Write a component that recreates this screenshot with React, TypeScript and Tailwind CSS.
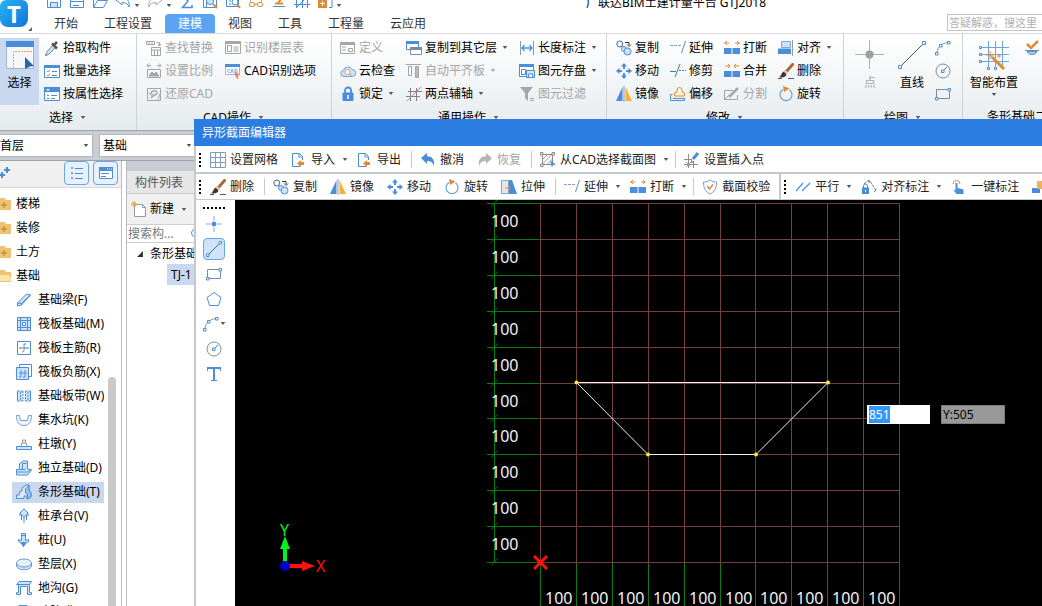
import { useEffect, useRef, type ReactNode } from "react";
import clsx from "clsx";

const B = "#4a8edb";
const G = "#a6a6a6";
const O = "#e08a35";
const L = "#cfe3f8";

const icons: Record<string, ReactNode> = {
  save: <g stroke={B}><path d="M1.5 1.5h13v13h-13z" fill="#fff" /><path d="M4.5 14V9.5h7V14M4.5 2v4h7V2" fill={L} /></g>,
  window: <g stroke={B}><path d="M1.5 1.5h13v13h-13z" fill="#fff" /><path d="M1.5 8.5h13M4 12.5h6" /></g>,
  open: <path d="M1.5 14.5V3.5h5l2 2h5v2M1.5 14.5l4-7h10l-4 7z" stroke={B} fill="#fff" />,
  undo: <path d="M1 6l6-5v3.200c5 0 8 3 7 10.300-1-4-3-5.500-7-5.500v3z" fill={B} />,
  undoLine: <path d="M1 7l6-5v3c5 0 8 3 7 9-1-3-3-4.500-7-4.500V12z" stroke={B} fill="#fff" />,
  redo: <path d="M15 6L9 1v3.200c-5 0-8 3-7 10.300 1-4 3-5.500 7-5.500v3z" fill="#b5b5b5" />,
  redoLine: <path d="M15 7L9 2v3c-5 0-8 3-7 9 1-3 3-4.500 7-4.500V12z" stroke={G} fill="#fff" />,
  sum: <path d="M13 4V1.500H3.500L9 8l-5.500 6.500H13V12" stroke={B} strokeWidth="1.500" />,
  searchBox: <g stroke={B}><path d="M1.500 1.500h13v13h-13zM4.500 8v6" /><circle cx="8" cy="8" r="3.500" fill={L} /><path d="M11 11l4 4" stroke={O} strokeWidth="2" /></g>,
  searchList: <g stroke={B}><path d="M1.500 1.500h12v12h-12zM4 5h2M4 8h2M4 11h2" /><circle cx="10" cy="9" r="3" fill="#fff" /><path d="M12 11l3 4" stroke={O} strokeWidth="2" /></g>,
  glasses: <g stroke={O}><path d="M2.500 9V2.500h11V9" stroke={G} /><rect x="1.500" y="9.500" width="5" height="4" rx="1.500" /><rect x="9.500" y="9.500" width="5" height="4" rx="1.500" /><path d="M6.500 11h3" /></g>,
  stamp: <g stroke={O}><path d="M2 13.500h12" stroke={B} /><path d="M4 10.500h8M7 10l5-6" strokeWidth="2" /></g>,
  mesh: <path d="M0 6.500h16M0 11.500h16M2.500 2v13M8.500 2v13M13.500 2v13M3 14l10-10" stroke={B} />,
  addBox: <g><rect x="1" y="6" width="9" height="9" fill={O} /><path d="M5.500 8v5M3 10.500h5" stroke="#fff" /><path d="M12 14.500h3V2" stroke={B} /></g>,
  dropper: <g><path d="M9 5l2.500 2.500-7 7-3 1 1-3z" fill={L} stroke="#6b7d90" /><path d="M8 3.500l5 5M10 5l3-3" stroke="#555" strokeWidth="2.500" /></g>,
  batch: <g><path d="M.5 2.500h15v12H.5z" stroke={B} fill="#fff" /><path d="M0 2h16v3H0z" fill={B} /><path d="M3 8l1 1 2-2M3 12l1 1 2-2" stroke={O} /><path d="M8 8.500h5M8 12.500h5" stroke={B} /></g>,
  attr: <g><path d="M.5 1.500h15v13H.5z" stroke={B} fill="#fff" /><path d="M0 1h16v5H0z" fill={B} /><path d="M2 3h4L4 5z" fill="#fff" /><path d="M3 9.500h2m2 0h6M3 12.500h2m2 0h4" stroke={B} /></g>,
  replace: <g stroke={G}><path d="M.5 1.500h8v3h-8zM3 2v2M6 2v2M10.500 2.500h3v3M12 4l1.500 2L15 4M5.500 7.500h9v8h-9zM5.500 10h9M8.500 10v5M11.500 10v5" /></g>,
  ratio: <g stroke={G}><path d="M1 2.500h4M3 .5l-2 2 2 2M15 2.500h-4M13 .5l2 2-2 2M1.500 6.500h13v8h-13z" /><path d="M3 13l3-4 2 2 2-2 3 4z" fill={G} /></g>,
  restore: <g stroke={G}><path d="M1.500 2.500h13v12h-13z" /><path d="M5 8c0-4 6-4 6-1 0 2-4 2-6 5" strokeWidth="1.500" /><path d="M3 7l2 2.500L8 8M12 14L15 5" /></g>,
  floorTable: <g stroke={G}><path d="M.5 1.500h15v12H.5zM2.500 5.500h4v6h-4zM8.500 7h5M8.500 9h5M8.500 11h5" /><path d="M1 3h14" strokeWidth="2" /></g>,
  cadOption: <g><path d="M.5 1.500h14v10H.5z" stroke="#8fb8e8" fill="#fff" /><path d="M0 1h15v3H0z" fill={B} /><path d="M5 6.500c-3-.5-3 3.500 0 3M6 10l1-4 1.500 4M10 6v4c3 0 3-4 0-4" stroke="#7daae0" /><path d="M10 8l5 4-2 .5.500 3-1.500.5-1-3-1 1z" fill="#e9875a" /></g>,
  define: <g stroke={G}><path d="M.5 2.500h14v11H.5zM2 7h4M2 10h4M8.500 8.500h4v3h-4z" /><path d="M0 3.500h15" strokeWidth="3" /></g>,
  cloud: <g><path d="M4 13.500a3 3 0 01-.5-6 4.500 4.500 0 018.500-1 3.500 3.500 0 01.5 7z" fill={L} stroke="#7ba3cf" /><circle cx="7.500" cy="9" r="2.500" stroke="#d69b78" fill="#fff" /><path d="M9.500 11l2 2" stroke={O} /></g>,
  lock: <g><path d="M5 7V4.500a3 3 0 016 0V7" stroke={B} strokeWidth="1.800" /><rect x="2.500" y="6.500" width="11" height="8.500" rx="1" fill={B} /><path d="M8 9v4" stroke="#fff" strokeWidth="1.500" /></g>,
  copyLayer: <g><path d="M.5 1.500h12v8H.5z" stroke={B} fill="#fff" /><path d="M0 1h13v3H0z" fill={B} /><path d="M4.500 7.500h11v7h-11z" stroke="#7c8c9c" fill="#fff" /><path d="M4 7h12v3H4z" fill="#7c8c9c" /></g>,
  alignSlab: <g stroke={G}><path d="M0 1.500h15M2.500 3.500h3v9h-3z" /><path d="M9.500 3.500h3v11h-3z" fill="#b8b8b8" /></g>,
  axis: <g stroke="#808080"><path d="M2 5.500h14M0 10.500h14M4.500 2v13M10.500 2v13" /><path d="M1 15L15 1" stroke="#c08a62" /></g>,
  length: <g stroke={B}><path d="M1.500 1v14M14.500 1v14" stroke="#7f9dbd" /><path d="M3 8h10M5.500 5L3 8l2.500 3M10.500 5L13 8l-2.500 3" strokeWidth="1.300" /></g>,
  store: <g><path d="M.5 2.500h14v11H.5z" stroke={B} fill="#fff" /><path d="M0 1h15v3H0z" fill={B} /><path d="M2.500 6.500h4v5h-4z" stroke={B} /><path d="M7.500 7.500h8v7h-8z" stroke={B} fill={L} /><path d="M9.500 14v-3h4v3" stroke={B} fill="#fff" /></g>,
  filter: <g><path d="M1 1h13L9 7v8l-3-3V7z" fill={G} /><path d="M11 12.500h4M11 14.500h4" stroke={G} /></g>,
  copy: <g><circle cx="3.800" cy="4" r="3" stroke="#58687a" fill="#f5f5f5" /><circle cx="8" cy="9" r="2.500" stroke={B} fill={L} /><circle cx="11.500" cy="11.500" r="3.500" stroke={B} fill={L} /><path d="M9 2.500h4V5M11 4.500l2 2 2-2" stroke="#333" /></g>,
  move: <g fill={B}><path d="M8 0l3 3.500H9V6H7V3.500H5zM8 16l3-3.500H9V10H7v2.500H5zM0 8l3.500-3v2H6v2H3.500v2zM16 8l-3.500-3v2H10v2h2.500v2z" /></g>,
  mirror: <g><path d="M6.500 1v14H0z" fill={B} /><path d="M9.500 1v14H16z" fill="#f2b233" /><path d="M8 0v16" stroke="#999" /></g>,
  extend: <g><path d="M0 5.500h11" stroke="#7da3cf" strokeDasharray="3 1" /><path d="M15.500 1l-4 12" stroke="#6a87a8" /></g>,
  trim: <g><path d="M0 8.500h6M9 7.500h2m1 0h2m1 0h1" stroke="#4a78ad" /><path d="M10 1L5 14" stroke="#4a78ad" /></g>,
  offset: <g><path d="M4.500 12.500v-3l2.500-1V6.500a2.500 2.500 0 015 0v2l2.500 1v3z" stroke={O} fill="#fff5e4" transform="translate(0 -2.500)" /><path d="M2.500 8.500h-2v6h14v-2" stroke={B} /><path d="M3 12.500h12" stroke={B} /></g>,
  split: <g><path d="M0 8h7.500v6H0zM8.500 8H16v6H8.500z" fill={B} /><path d="M0 3h5M3 1L1 3l2 2M16 3h-5M13 1l2 2-2 2" stroke={O} /></g>,
  merge: <g><path d="M0 8h7.500v6H0zM8.500 8H16v6H8.500z" fill={B} /><path d="M1 3h5M4 1l2 2-2 2M15 3h-5M12 1l-2 2 2 2" stroke={O} /></g>,
  cut: <g stroke={G}><path d="M9 4.500H.5v9h13V9M.5 13.500L5 9" /><path d="M5 11l9-9" strokeWidth="2.500" /></g>,
  align: <g><path d="M3.500 1.500h9v6h-9z" fill={L} stroke="#7fa9d4" /><path d="M0 8.500h13V14H0z" fill={B} /><path d="M14.500 0v16" stroke="#999" /></g>,
  brush: <g><path d="M14.500 1.500L8 9" stroke="#a86a33" strokeWidth="3" strokeLinecap="round" /><path d="M6 7.500l4 3" stroke="#d6d0c8" strokeWidth="2" /><path d="M5.500 8.500l3 3c-1 3-4 3-7.500 3 2-1 2-4 4.500-6z" fill="#4a3324" /><path d="M0 15.500h4m6 0h6" stroke="#555" /></g>,
  rotate: <g><path d="M5 3.500a6 6 0 106.500.3" stroke="#6d9bd0" strokeWidth="1.200" /><path d="M5 0l6.500 2.500L6 6z" fill={O} /></g>,
  arc: <g stroke={B}><path d="M2 13C2 7 7 3 13 2.500" stroke="#8292a4" /><path d="M.5 12.500h2.500V15H.5zM4.500 4.500H7V7H4.500zM12.500 1.500H15V4h-2.500z" fill="#fff" /></g>,
  circle: <g><circle cx="8" cy="8" r="7" stroke="#7c8c9e" /><path d="M8 8l4-4" stroke={B} /><path d="M6.500 7h2.500v2.500H6.500z" stroke={B} fill="#fff" /></g>,
  rect: <g><path d="M1.500 3.500h13v9h-13z" stroke="#7c8c9e" /><path d="M.5 11.500H3V14H.5zM13 2.500h2.500V5H13z" fill="#fff" stroke={B} /></g>,
  check: <g><path d="M3 4l4 4 7-7" stroke={O} strokeWidth="2.500" /><path d="M1 10.500h14M3 11.500c2 4 8 4 10 0z" stroke="#5f8fc4" fill="#a9c9ee" /></g>,
  grid: <path d="M.5.5h15v15H.5zM.5 5.500h15M.5 10.500h15M5.500.5v15M10.500.5v15" stroke="#7f9dbd" />,
  importDoc: <g><path d="M9 14.500H1.500v-13h7l3 3V8" stroke={B} /><path d="M8 1.500v3.500h3" stroke={B} /><path d="M6 11.500L10 8v2h3v3h-3v2z" fill={O} /></g>,
  pickCad: <g><path d="M2.500 2.500h10v10h-10z" stroke="#888" /><path d="M2 8l6-6M2 12.500L12.500 2M7 12.500L12.500 7" stroke="#999" /><path d="M.5.5H3V3H.5zM12 .5h2.500V3H12zM.5 12H3v2.500H.5z" stroke="#888" fill="#fff" /><path d="M10 8.500l6 4-3 .5-1 2.500z" fill={B} /></g>,
  insertPt: <g><path d="M4.500 2v14M9.500 9v7M0 7.500h8M0 12.500h14" stroke="#8a8a8a" /><path d="M14 1L9 7" stroke={B} strokeWidth="3" /><path d="M7 11l0-3 3 2z" fill={B} /><path d="M2 10l5 5M7 10l-5 5" stroke="#d99a70" /></g>,
  stretch: <g><path d="M.5 1.500h7v13h-7z" stroke="#8da3ba" fill="#e2e7ee" /><path d="M8 1h3l5 14H8z" fill={B} /><path d="M4 9h5M7 7l2 2-2 2" stroke={O} /></g>,
  shield: <g><path d="M8 1c2 1.500 4 2 6.500 2 0 6-2 10-6.500 12C3.500 13 1.500 9 1.500 3 4 3 6 2.500 8 1z" stroke="#6da0d8" fill="#fff" /><path d="M5 7l2.500 3L11 5.500" stroke={O} strokeWidth="1.500" /></g>,
  parallel: <path d="M1 12L8 4M7 12l8-8" stroke={B} strokeWidth="1.200" />,
  alignDim: <g><path d="M2.500 9V7a2 2 0 014 0v2" stroke={B} /><path d="M1 8.500h7V15H1z" fill={B} /><path d="M4.500 11v2" stroke="#fff" /><path d="M3 5l5-4 7 10M8 1v3M13 13l3-3" stroke="#667d94" strokeDasharray="3 1" /></g>,
  hand: <g><path d="M2 5a3.500 3.500 0 117 0" stroke={O} /><path d="M4.500 4h2v5l6 1.500V15h-7L2 10.500l2.500 1z" fill={B} /></g>,
  blocks: <g><path d="M0 9h8v5H0z" fill={B} /><path d="M5 2h9v8H5z" fill="#f0b05c" /></g>,
  point: <g stroke={B}><path d="M8 0v5M8 11v5M0 8h5M11 8h5" stroke="#86aee0" /><circle cx="8" cy="8" r="2" fill={B} /></g>,
  line: <g stroke={B}><path d="M2 14L14 2" stroke="#55687c" /><path d="M.5 13H3v2.500H.5zM13 .5h2.500V3H13z" fill="#fff" /></g>,
  pentagon: <path d="M8 1.500L15 6.500 12.500 14.500h-9L1 6.500z" stroke={B} fill="#fff" />,
  tool: <g stroke={B}><path d="M1.500 5V1.500h13V5M5 14.500h6" /><path d="M1 2h14M8 1.500v13" strokeWidth="2" /></g>,
  newDoc: <g><path d="M3.500 3.500h8l3 3v9h-11z" stroke="#8f9ba8" fill="#fff" /><path d="M11.500 3.500v3h3" stroke="#8f9ba8" /><path d="M1 1l4 4M5 1L1 5M3 0v6M0 3h6" stroke="#eda23c" /></g>,
  beam: <g stroke={B}><path d="M1.500 11l9-9 4 1-9 10-4 1z" fill={L} /><path d="M1.500 11l4 .5v1.500M5.500 11.500l9-8.500" /></g>,
  raft: <g stroke={B}><path d="M1.500 1.500h13v13h-13z" fill={L} /><path d="M1.500 4.500h13M1.500 11.500h13M4.500 1.500v13M11.500 1.500v13" /><path d="M6.500 6.500h3v3h-3z" fill="#fff" /></g>,
  raftMain: <g><path d="M1.500 1.500h13v13h-13z" stroke={B} fill="#fff" /><path d="M4 8h8M8 4c0 4 1 8-2 8M4 7v2M12 7v2M8 4h2" stroke="#6a87a5" /></g>,
  raftNeg: <g stroke={B}><path d="M3.500.5h12v12h-12z" /><path d="M.5 3.500h12v12H.5z" fill={L} /><path d="M5 6v7H3M9 6v7H7M3 9h8" /></g>,
  band: <g stroke={B}><path d="M1.500 3v10M14.500 3v10" /><path d="M2 3h12v10H2z" fill={L} stroke="none" /><path d="M8 3v10" stroke="#fff" strokeWidth="2" /><path d="M1.500 3h5M9.500 3h5M1.500 13h5M9.500 13h5M4.500 4v8M7 3v10M9.500 3v10M12 4v8" strokeDasharray="2 1" /></g>,
  pit: <path d="M.5 3.500h3l1 5h7l1-5h3c0 6-2 10-7.500 10S.5 9.500.5 3.500z" stroke="#78a2d0" fill="#edf5fd" />,
  pier: <g stroke={B}><path d="M.5 10.500h15v3H.5z" fill={L} /><path d="M5 10l1-3h4l1 3M6.500 7V4h3v3" stroke="#8a97a2" /></g>,
  single: <g stroke={B}><path d="M.5 12.500v-3h3V3.500l4-2.500h4v8l4 1-4 5H.5z" fill={L} /><path d="M6.500 9V3.500h4M.5 12h11l4-3M3.500 9.500h6" /></g>,
  strip: <g stroke={B}><path d="M.5 14.500V11h2.500l1-4h2V4l4-3h3v5l2 3v4l-4 2v-3H8v2.500z" fill="#dbe9f8" /><path d="M9.500 5l3.500-4v5l2 3v4l-3.500 2V10l-2-1z" fill="#9cc3f0" /></g>,
  cap: <g stroke={B}><path d="M8 .8L12 5 8 9.500 4 5z" fill={L} /><path d="M5.500 7v5M8 9v6M10.500 7v5M4 5v3M12 5v3" /></g>,
  pile: <g stroke={B}><path d="M5.500 1.500h4v7l3-1v2l-3 2L7.500 14.500 5.500 11.500l-3-2v-2l3 1z" fill={L} /><path d="M5.500 3.500h4M5.500 10.500h4l-2 4z" fill={B} /></g>,
  cushion: <g stroke="#6c9bd0"><path d="M.5 7v3c1 5 14 5 15 0V7" fill={L} /><ellipse cx="8" cy="7" rx="7.500" ry="4" fill="#e8f2fc" /></g>,
  trench: <g stroke={B}><path d="M.5 4.500l3-3h12l-2 3zM2.500 4.500v8h-2v2h4v-8h7v8h4v-2h-2v-8" fill={L} /></g>,
  hook: <g stroke={B}><path d="M3 1.500h8v13H3z" fill={B} /></g>,
};

function Icon({ name, className = "h-4 w-4" }: { name: string; className?: string }) {
  return (
    <svg viewBox="0 0 16 16" fill="none" className={clsx("shrink-0", className)} aria-hidden="true">
      {icons[name]}
    </svg>
  );
}

function Caret({ className, muted }: { className?: string; muted?: boolean }) {
  return (
    <svg viewBox="0 0 6 4" className={clsx("h-[3px] w-1.5 shrink-0", className)} aria-hidden="true">
      <path d="M0 0h6L3 4z" fill={muted ? "#a8a8a8" : "#555"} />
    </svg>
  );
}

interface Action {
  icon: string;
  label: string;
  menu?: boolean;
  disabled?: boolean;
}

function RibbonColumn({ items }: { items: Action[] }) {
  return (
    <div className="flex flex-col items-start">
      {items.map((item) => (
        <button
          key={item.label}
          type="button"
          disabled={item.disabled}
          className="flex h-[23px] items-center gap-[3px] whitespace-nowrap text-black disabled:text-[#a5a5a5]"
        >
          <Icon name={item.icon} />
          {item.label}
          {item.menu && <Caret muted={item.disabled} className="ml-0.5" />}
        </button>
      ))}
    </div>
  );
}

function RibbonGroup({ title, className, children }: { title: string; className?: string; children: ReactNode }) {
  return (
    <section className="flex shrink-0 flex-col border-r border-[#cdd2d6] pt-0.5">
      <div className={clsx("flex h-[69px]", className)}>{children}</div>
      <button type="button" className="flex h-[26px] items-center justify-center gap-1.5 whitespace-nowrap">
        {title}
        <Caret className="w-2" />
      </button>
    </section>
  );
}

function BigButton({ label, className, disabled, menu, children }: { label: string; className?: string; disabled?: boolean; menu?: boolean; children: ReactNode }) {
  return (
    <button
      type="button"
      disabled={disabled}
      className={clsx("flex shrink-0 flex-col items-center whitespace-nowrap pt-0.5 disabled:text-[#a5a5a5]", className)}
    >
      <svg viewBox="0 0 30 30" fill="none" className="h-[30px] w-[30px]" aria-hidden="true">
        {children}
      </svg>
      <span className="mt-[3px] leading-5">{label}</span>
      {menu && <Caret />}
    </button>
  );
}

const quickIcons: { icon: string; menu?: boolean }[] = [
  { icon: "save" },
  { icon: "window" },
  { icon: "open" },
  { icon: "undoLine", menu: true },
  { icon: "redoLine", menu: true },
  { icon: "sum" },
  { icon: "searchBox" },
  { icon: "searchList" },
  { icon: "glasses" },
  { icon: "stamp" },
  { icon: "mesh" },
  { icon: "addBox", menu: true },
];

const tabs = ["开始", "工程设置", "建模", "视图", "工具", "工程量", "云应用"];

function Header() {
  return (
    <header className="flex h-[33px] shrink-0 bg-white">
      <div className="flex w-[41px] shrink-0 items-start">
        <div className="flex h-[27px] w-7 items-center justify-center rounded-b-lg rounded-t-md bg-gradient-to-br from-[#27b4f2] to-[#1475dc] text-2xl font-bold leading-none text-white">
          T
        </div>
        <svg viewBox="0 0 4 4" className="mt-[27px] h-1 w-1"><path d="M4 0v4H0z" fill="#666" /></svg>
      </div>
      <div className="flex min-w-0 flex-1 flex-col">
        <div className="flex h-3.5 shrink-0 items-end">
          <div className="flex items-end gap-[7px] pb-[5px] pl-[5px]">
            {quickIcons.map((item) => (
              <button key={item.icon} type="button" aria-label={item.icon} className="flex items-center gap-[3px]">
                <Icon name={item.icon} />
                {item.menu && <Caret className="mt-2" />}
              </button>
            ))}
          </div>
          <h1 className="flex-1 whitespace-nowrap pb-[3px] pr-8 text-center leading-4">广联达BIM土建计量平台 GTJ2018</h1>
        </div>
        <div className="flex">
          <nav className="flex">
            {tabs.map((tab) => (
              <button
                key={tab}
                type="button"
                className={clsx("h-[19px] px-[13px] leading-[19px]", tab === "建模" ? "rounded-t-sm bg-[#5ba4f4] text-white" : "text-[#333]")}
              >
                {tab}
              </button>
            ))}
          </nav>
          <input
            aria-label="搜索"
            placeholder="答疑解惑，搜这里"
            className="ml-auto h-[17px] w-[95px] border border-r-0 border-[#c4c4c4] pl-px text-[11px] placeholder:text-[#b0b0b0]"
          />
        </div>
      </div>
    </header>
  );
}

function Ribbon() {
  return (
    <div className="flex h-[98px] shrink-0 overflow-hidden border-y border-t-[#d6d9dc] border-b-[#9ea3aa] bg-gradient-to-b from-white to-[#e6ebee]">
      <RibbonGroup title="选择" className="w-[136px] gap-[5px]">
        <BigButton label="选择" className="mt-0.5 w-[39px] bg-[#c8d8ef]">
          <path d="M1.500 1.500h27v27h-27z" fill="#f5f7fa" stroke="#9db4d0" />
          <path d="M1 1h28v6H1z" fill={B} />
          <path d="M8.500 28V11.500H29" stroke="#e5ab45" strokeDasharray="2 1" />
          <path d="M20 17l9 9-4 .5L20 29z" fill="#2a66ad" />
        </BigButton>
        <RibbonColumn
          items={[
            { icon: "dropper", label: "拾取构件" },
            { icon: "batch", label: "批量选择" },
            { icon: "attr", label: "按属性选择" },
          ]}
        />
      </RibbonGroup>
      <RibbonGroup title="CAD操作" className="w-[194px] gap-3 pl-[9px]">
        <RibbonColumn
          items={[
            { icon: "replace", label: "查找替换", disabled: true },
            { icon: "ratio", label: "设置比例", disabled: true },
            { icon: "restore", label: "还原CAD", disabled: true },
          ]}
        />
        <RibbonColumn
          items={[
            { icon: "floorTable", label: "识别楼层表", disabled: true },
            { icon: "cadOption", label: "CAD识别选项" },
          ]}
        />
      </RibbonGroup>
      <RibbonGroup title="通用操作" className="w-[274px] gap-[11px] pl-2">
        <RibbonColumn
          items={[
            { icon: "define", label: "定义", disabled: true },
            { icon: "cloud", label: "云检查" },
            { icon: "lock", label: "锁定", menu: true },
          ]}
        />
        <RibbonColumn
          items={[
            { icon: "copyLayer", label: "复制到其它层", menu: true },
            { icon: "alignSlab", label: "自动平齐板", menu: true, disabled: true },
            { icon: "axis", label: "两点辅轴", menu: true },
          ]}
        />
        <RibbonColumn
          items={[
            { icon: "length", label: "长度标注", menu: true },
            { icon: "store", label: "图元存盘", menu: true },
            { icon: "filter", label: "图元过滤", disabled: true },
          ]}
        />
      </RibbonGroup>
      <RibbonGroup title="修改" className="w-[236px] gap-[11px] pl-[9px]">
        <RibbonColumn
          items={[
            { icon: "copy", label: "复制" },
            { icon: "move", label: "移动" },
            { icon: "mirror", label: "镜像" },
          ]}
        />
        <RibbonColumn
          items={[
            { icon: "extend", label: "延伸" },
            { icon: "trim", label: "修剪" },
            { icon: "offset", label: "偏移" },
          ]}
        />
        <RibbonColumn
          items={[
            { icon: "split", label: "打断" },
            { icon: "merge", label: "合并" },
            { icon: "cut", label: "分割", disabled: true },
          ]}
        />
        <RibbonColumn
          items={[
            { icon: "align", label: "对齐", menu: true },
            { icon: "brush", label: "删除" },
            { icon: "rotate", label: "旋转" },
          ]}
        />
      </RibbonGroup>
      <RibbonGroup title="绘图" className="w-[118px] pl-[5px]">
        <BigButton label="点" disabled className="mt-0.5 w-[42px]">
          <path d="M14.500 0v29M0 14.500h29" stroke="#b0b0b0" />
          <circle cx="14.500" cy="14.500" r="4" fill="#a0a0a0" />
        </BigButton>
        <BigButton label="直线" className="mt-0.5 w-[42px]">
          <path d="M3 27L27 3" stroke="#555" />
          <path d="M1.500 25.500h3v3h-3zM25.500 1.500h3v3h-3z" fill="#fff" stroke={B} />
        </BigButton>
        <div className="flex w-5 flex-col items-center">
          {["arc", "circle", "rect"].map((name) => (
            <button key={name} type="button" aria-label={name} className="flex h-[23px] items-center">
              <Icon name={name} />
            </button>
          ))}
        </div>
      </RibbonGroup>
      <section className="flex flex-1 flex-col pl-[3px] pt-0.5">
        <div className="flex h-[69px] gap-0.5">
          <BigButton label="智能布置" menu className="mt-0.5 w-14">
            <path d="M2 7.500h28M2 14.500h28M2 21.500h28M9.500 1v28M16.500 1v28M23.500 1v28" stroke="#6ea5e0" />
            <path d="M.5 6.500h2v2h-2zM.5 13.500h2v2h-2zM.5 20.500h2v2h-2zM8.500 27.500h2v2h-2zM15.500 27.500h2v2h-2z" fill="#fff" stroke={B} />
            <path d="M13 17l12 12" stroke={O} strokeWidth="3" />
            <path d="M11 11v8M7 15h8M9 13l5 5M20 14v4M18 16h4" stroke={O} />
          </BigButton>
          <button type="button" aria-label="校核" className="flex h-[23px] items-center">
            <Icon name="check" />
          </button>
        </div>
        <button type="button" className="h-[26px] whitespace-nowrap pl-[21px] text-left">条形基础二次编辑</button>
      </section>
    </div>
  );
}

function Combo({ label, value, className }: { label: string; value: string; className?: string }) {
  return (
    <div className={clsx("relative h-[23px] border border-[#b4b8be] bg-white", className)}>
      <select aria-label={label} className="h-full w-full appearance-none pl-[3px] leading-5">
        <option>{value}</option>
      </select>
      <Caret className="pointer-events-none absolute right-[3px] top-[9px]" />
    </div>
  );
}

const categories = ["楼梯", "装修", "土方", "基础"];

const elements = [
  { icon: "beam", label: "基础梁(F)" },
  { icon: "raft", label: "筏板基础(M)" },
  { icon: "raftMain", label: "筏板主筋(R)" },
  { icon: "raftNeg", label: "筏板负筋(X)" },
  { icon: "band", label: "基础板带(W)" },
  { icon: "pit", label: "集水坑(K)" },
  { icon: "pier", label: "柱墩(Y)" },
  { icon: "single", label: "独立基础(D)" },
  { icon: "strip", label: "条形基础(T)" },
  { icon: "cap", label: "桩承台(V)" },
  { icon: "pile", label: "桩(U)" },
  { icon: "cushion", label: "垫层(X)" },
  { icon: "trench", label: "地沟(G)" },
  { icon: "hook", label: "砖胎膜" },
];

function ElementPanel() {
  return (
    <aside className="flex w-[122px] shrink-0 flex-col border-r border-[#b9bcc0] bg-white">
      <div className="flex h-[27px] shrink-0 items-start border-b border-[#d8d8d8] bg-[#f0f0f0]">
        <svg viewBox="0 0 10 12" className="mt-1.5 h-3 w-2.5" aria-hidden="true">
          <path d="M7 0v6M4 3h6M2 5v6M0 8h5" stroke={B} strokeWidth="2" />
        </svg>
        <button type="button" aria-label="列表" className="ml-auto flex h-6 w-[25px] items-center justify-center rounded-sm border border-[#6aa5e6] bg-[#e6f1fd]">
          <svg viewBox="0 0 14 14" className="h-3.5 w-3.5" fill="none">
            <path d="M1.500 1.500h1v1h-1zM1.500 6.500h1v1h-1zM1.500 11.500h1v1h-1zM5 2.500h8M5 7.500h8M5 12.500h8" stroke={B} />
          </svg>
        </button>
        <button type="button" aria-label="图标" className="ml-1 mr-[3px] flex h-6 w-[25px] items-center justify-center rounded-sm border border-[#6aa5e6] bg-[#e6f1fd]">
          <svg viewBox="0 0 14 14" className="h-3.5 w-3.5" fill="none">
            <path d="M.5 1.500h13v11H.5z" stroke={B} fill="#fff" />
            <path d="M0 1h14v4H0z" fill={B} />
            <path d="M2 7.500h8M2 10.500h5" stroke={B} />
            <path d="M8 3h1M10 3h1M12 3h1" stroke="#fff" />
          </svg>
        </button>
      </div>
      <div className="flex min-h-0 flex-1 overflow-hidden pt-1">
        <ul className="w-[104px] shrink-0 overflow-hidden">
          {categories.map((name) => (
            <li key={name} className="flex h-6 items-center gap-1">
              <svg viewBox="0 0 12 12" className="h-3 w-3 shrink-0" aria-hidden="true">
                <path d="M0 0h5l1 2h5v10H0z" fill="#eec272" />
                {name === "基础" ? <path d="M0 5h9l3 6H0z" fill="#fbe3ae" /> : <path d="M4 4v6M1 7h6" stroke="#b07f2c" />}
              </svg>
              {name}
            </li>
          ))}
          {elements.map((item) => (
            <li key={item.label} className="flex h-6 items-center pl-3">
              <button
                type="button"
                className={clsx("flex h-[21px] flex-1 items-center gap-1.5 whitespace-nowrap pl-1", item.icon === "strip" && "bg-[#c8d8ef]")}
              >
                <Icon name={item.icon} />
                {item.label}
              </button>
            </li>
          ))}
        </ul>
        <div className="ml-1 mt-[185px] w-2 rounded-t-full bg-[#c9c9c9]" />
      </div>
    </aside>
  );
}

function ComponentList() {
  return (
    <section className="ml-1 flex flex-1 flex-col border-l border-[#b9bcc0] bg-white">
      <div className="h-2.5 shrink-0 bg-[#c9ccd2]" />
      <h2 className="h-[23px] shrink-0 border-b border-[#c8c8c8] bg-[#e6e6e6] pl-2 leading-6 text-[#555]">构件列表</h2>
      <div className="flex h-[30px] shrink-0 items-center bg-[#f0f0f0] pl-1">
        <button type="button" className="flex items-center gap-[3px]">
          <Icon name="newDoc" />
          新建
          <Caret className="ml-1" />
        </button>
      </div>
      <div className="flex h-[19px] shrink-0 items-center border-y border-[#cfcfcf]">
        <input aria-label="搜索构件" placeholder="搜索构..." className="w-16 pl-px placeholder:text-[#777]" />
        <svg viewBox="0 0 10 10" className="h-2.5 w-2.5" fill="none"><circle cx="4" cy="4" r="3.500" stroke={B} /></svg>
      </div>
      <ul>
        <li className="flex h-[21px] items-center gap-[7px] pl-2.5">
          <svg viewBox="0 0 6 6" className="h-1.5 w-1.5"><path d="M6 0v6H0z" fill="#333" /></svg>
          条形基础
        </li>
        <li className="ml-10 h-[21px] bg-[#c8d8ef] pl-1 leading-[21px]">TJ-1</li>
      </ul>
    </section>
  );
}

function Grip() {
  return <div className="h-3.5 w-0 shrink-0 border-l-2 border-dotted border-black" />;
}

function Divider() {
  return <div className="ml-[3px] mr-0.5 h-[17px] w-px shrink-0 bg-[#c9c9c9]" />;
}

function ToolButton({ icon, label, menu, disabled }: Action) {
  return (
    <button
      type="button"
      disabled={disabled}
      className={clsx(
        "flex h-full shrink-0 items-center gap-1 whitespace-nowrap pl-1.5 text-[#222] disabled:text-[#a5a5a5]",
        menu ? "pr-[3px]" : "pr-[7px]"
      )}
    >
      <Icon name={icon} />
      {label}
      {menu && <Caret className="ml-[3px]" />}
    </button>
  );
}

const marks = Array.from({ length: 11 }, (_, i) => i);
const cells = marks.slice(0, 10);

// one 100 mm cell on screen
const at = (i: number) => Math.round(i * 35.9);

function SectionDrawing() {
  return (
    <svg className="absolute inset-0 h-full w-full" fill="none" aria-label="截面">
      <g stroke="#743f3f">
        {marks.map((i) => (
          <path key={i} d={`M305.500 ${3.5 + at(i)}h359M${305.5 + at(i)} 3.500v359`} />
        ))}
      </g>
      <g stroke="#0a7a12">
        <path d="M259.500 3v360" />
        {marks.map((i) => (
          <path key={i} d={`M252 ${3.5 + at(i)}h53M256 ${6.5 + at(i)}l7-7M${305.5 + at(i)} 363v400`} />
        ))}
      </g>
      <g fill="#f2f2f2" fontSize="16">
        {cells.map((i) => (
          <text key={i} x="256" y={27 + at(i)}>100</text>
        ))}
        {cells.map((i) => (
          <text key={i} x={310 + at(i)} y="404">100</text>
        ))}
      </g>
      <path d="M341.500 182.500h251.500l-72 72H413z" stroke="#f0f0f0" />
      <g fill="#ffee33">
        <circle cx="341.500" cy="182.500" r="2" />
        <circle cx="593" cy="182.500" r="2" />
        <circle cx="521" cy="254.500" r="2" />
        <circle cx="413" cy="254.500" r="2" />
      </g>
      <path d="M299 356l13 13M312 356l-13 13" stroke="#ff1010" strokeWidth="3" />
      <path d="M50 366V346" stroke="#00f020" strokeWidth="4" />
      <path d="M50 336l5 13H45z" fill="#00f020" />
      <path d="M50 366h18" stroke="#ff1010" strokeWidth="4" />
      <path d="M80 366l-13-5v10z" fill="#ff1010" />
      <circle cx="50" cy="366" r="5" fill="#0000cc" />
      <text x="45" y="336" fill="#00f020" fontSize="16">Y</text>
      <text x="81" y="372" fill="#ff1010" fontSize="16">X</text>
    </svg>
  );
}

function SectionEditor() {
  const xInput = useRef<HTMLInputElement>(null);

  useEffect(() => {
    xInput.current?.focus();
    xInput.current?.select();
  }, []);

  return (
    <div role="dialog" aria-label="异形截面编辑器" className="absolute bottom-0 left-[194px] right-0 top-[119px] flex flex-col overflow-hidden bg-white">
      <h2 className="h-[27px] shrink-0 bg-[#2b7de1] pl-2 leading-7 text-white">异形截面编辑器</h2>
      <div className="flex min-h-0 flex-1 flex-col border-l-2 border-[#c5c8cd]">
        <div className="flex h-7 shrink-0 items-center border-b-2 border-[#c5c8cd] pl-[3px] pt-px">
          <Grip />
          <div className="ml-[3px] flex h-full items-center">
            <ToolButton icon="grid" label="设置网格" />
            <ToolButton icon="importDoc" label="导入" menu />
            <ToolButton icon="importDoc" label="导出" />
            <Divider />
            <ToolButton icon="undo" label="撤消" />
            <ToolButton icon="redo" label="恢复" disabled />
            <Divider />
            <ToolButton icon="pickCad" label="从CAD选择截面图" menu />
            <Divider />
            <ToolButton icon="insertPt" label="设置插入点" />
          </div>
        </div>
        <div className="flex h-[26px] shrink-0 items-center border-b border-[#c5c8cd] pl-[3px]">
          <Grip />
          <div className="ml-[3px] flex h-full items-center">
            <ToolButton icon="brush" label="删除" />
            <Divider />
            <ToolButton icon="copy" label="复制" />
            <ToolButton icon="mirror" label="镜像" />
            <ToolButton icon="move" label="移动" />
            <ToolButton icon="rotate" label="旋转" />
            <ToolButton icon="stretch" label="拉伸" />
            <Divider />
            <ToolButton icon="extend" label="延伸" menu />
            <ToolButton icon="split" label="打断" menu />
            <Divider />
            <ToolButton icon="shield" label="截面校验" />
          </div>
          <div className="ml-0.5 flex h-full items-center border-l-2 border-[#c5c8cd] pl-[3px]">
            <Grip />
            <div className="ml-[3px] flex h-full items-center">
              <ToolButton icon="parallel" label="平行" menu />
              <ToolButton icon="alignDim" label="对齐标注" menu />
              <ToolButton icon="hand" label="一键标注" />
              <button type="button" aria-label="更多" className="pl-1.5">
                <Icon name="blocks" />
              </button>
            </div>
          </div>
        </div>
        <div className="flex min-h-0 flex-1">
          <div className="flex w-[39px] shrink-0 flex-col items-center pr-[3px] pt-[7px]">
            <div className="mb-0.5 h-0 w-[22px] border-t-2 border-dotted border-black" />
            {["point", "line", "rect", "pentagon", "arc", "circle", "tool"].map((name) => (
              <div key={name} className="flex h-[25px] shrink-0 items-center">
                <button
                  type="button"
                  aria-label={name}
                  className={clsx(
                    "flex h-[22px] items-center justify-center rounded-sm border",
                    name === "line" ? "border-[#6aa5e6] bg-[#cfe4fb]" : "border-transparent",
                    name === "arc" ? "w-7 gap-px" : "w-[22px]"
                  )}
                >
                  <Icon name={name} />
                  {name === "arc" && <Caret />}
                </button>
              </div>
            ))}
          </div>
          <div className="relative flex-1 overflow-hidden bg-black">
            <SectionDrawing />
            <input
              ref={xInput}
              aria-label="X"
              defaultValue="851"
              className="absolute left-[632px] top-[205px] h-[19px] w-[63px] bg-white pl-0.5 text-black outline-none selection:bg-[#3297fd] selection:text-white"
            />
            <input
              aria-label="Y"
              defaultValue="Y:505"
              className="absolute left-[706px] top-[205px] h-[19px] w-16 border border-[#7d7d7d] bg-[#989898] pl-px text-black outline-none"
            />
          </div>
        </div>
      </div>
    </div>
  );
}

export default function App() {
  return (
    <div className="relative flex h-screen flex-col overflow-hidden bg-white font-['Noto_Sans','Noto_Sans_CJK_SC',sans-serif] text-xs text-black">
      <Header />
      <Ribbon />
      <div className="flex h-[30px] shrink-0 items-center gap-1.5 border-b border-[#9ea3aa] bg-[#c9ccd2]">
        <Combo label="楼层" value="首层" className="-ml-1 w-[97px]" />
        <Combo label="构件类型" value="基础" className="w-[97px]" />
      </div>
      <div className="flex min-h-0 flex-1">
        <ElementPanel />
        <ComponentList />
      </div>
      <SectionEditor />
    </div>
  );
}
